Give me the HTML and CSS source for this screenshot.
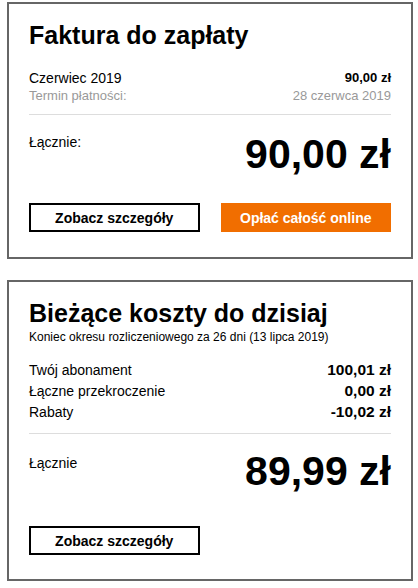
FILE: index.html
```html
<!DOCTYPE html>
<html lang="pl">
<head>
<meta charset="utf-8">
<link rel="stylesheet" href="styles.css">
</head>
<body>
<div class="page">
  <section class="card card-1">
    <h1 class="title">Faktura do zapłaty</h1>
    <div class="row">
      <span>Czerwiec 2019</span>
      <span class="strong">90,00 zł</span>
    </div>
    <div class="row muted">
      <span>Termin płatności:</span>
      <span>28 czerwca 2019</span>
    </div>
    <hr class="divider">
    <div class="total">
      <span class="total-label">Łącznie:</span>
      <span class="total-value">90,00 zł</span>
    </div>
    <div class="actions">
      <button class="btn btn-outline">Zobacz szczegóły</button>
      <button class="btn btn-primary">Opłać całość online</button>
    </div>
  </section>

  <section class="card card-2">
    <h1 class="title">Bieżące koszty do dzisiaj</h1>
    <p class="subtitle">Koniec okresu rozliczeniowego za 26 dni (13 lipca 2019)</p>
    <div class="rows">
      <div class="row row-big">
        <span>Twój abonament</span>
        <span class="strong">100,01 zł</span>
      </div>
      <div class="row row-big">
        <span>Łączne przekroczenie</span>
        <span class="strong">0,00 zł</span>
      </div>
      <div class="row row-big">
        <span>Rabaty</span>
        <span class="strong">-10,02 zł</span>
      </div>
    </div>
    <hr class="divider">
    <div class="total">
      <span class="total-label">Łącznie</span>
      <span class="total-value">89,99 zł</span>
    </div>
    <div class="actions actions-2">
      <button class="btn btn-outline">Zobacz szczegóły</button>
    </div>
  </section>
</div>
</body>
</html>
```

FILE: styles.css
```css
html, body {
  margin: 0;
  padding: 0;
  background: #fff;
}

body {
  font-family: "Liberation Sans", Arial, Helvetica, sans-serif;
  color: #000;
}

.page {
  display: flex;
  flex-direction: column;
  gap: 21px;
  padding: 2px 0 0 7px;
}

.card {
  width: 406px;
  box-sizing: border-box;
  border: 2px solid #666;
  padding: 17px 20px 25px 20px;
}

.card-2 {
  padding-bottom: 24px;
}

.title {
  margin: 0;
  font-size: 25px;
  line-height: 28px;
  font-weight: bold;
}

.row {
  display: flex;
  justify-content: space-between;
  font-size: 14px;
  line-height: 18px;
}

.card > .row:first-of-type {
  margin-top: 20px;
}

.strong {
  font-weight: bold;
  font-size: 13px;
}

.muted {
  color: #999;
  font-size: 13px;
}

.divider {
  border: 0;
  border-top: 1px solid #ddd;
  margin: 9px 0 0 0;
  height: 0;
}

.total {
  display: flex;
  justify-content: space-between;
  align-items: flex-start;
  margin-top: 18px;
}

.total-label {
  font-size: 14px;
  line-height: 18px;
}

.total-value {
  font-size: 41px;
  line-height: 40px;
  font-weight: bold;
  margin-top: 1px;
}

.actions {
  display: grid;
  grid-template-columns: 1fr 1fr;
  gap: 21px;
  margin-top: 29px;
}

.btn {
  height: 29px;
  box-sizing: border-box;
  font-family: "Liberation Sans", Arial, Helvetica, sans-serif;
  font-size: 14px;
  font-weight: bold;
  padding: 0;
  cursor: pointer;
}

.btn-outline {
  background: #fff;
  color: #000;
  border: 2px solid #000;
}

.btn-primary {
  background: #f16e00;
  color: #fff;
  border: 0;
}

.subtitle {
  margin: 2px 0 0 0;
  font-size: 12px;
  line-height: 16px;
}

.rows {
  margin-top: 16px;
  display: flex;
  flex-direction: column;
  gap: 3px;
}

.row-big .strong {
  font-size: 15.5px;
}

.card-2 .divider {
  margin-top: 12px;
}

.card-2 .total {
  margin-top: 16px;
}

.card-2 .total-label {
  padding-top: 4px;
}

.actions-2 {
  margin-top: 35px;
}
```
